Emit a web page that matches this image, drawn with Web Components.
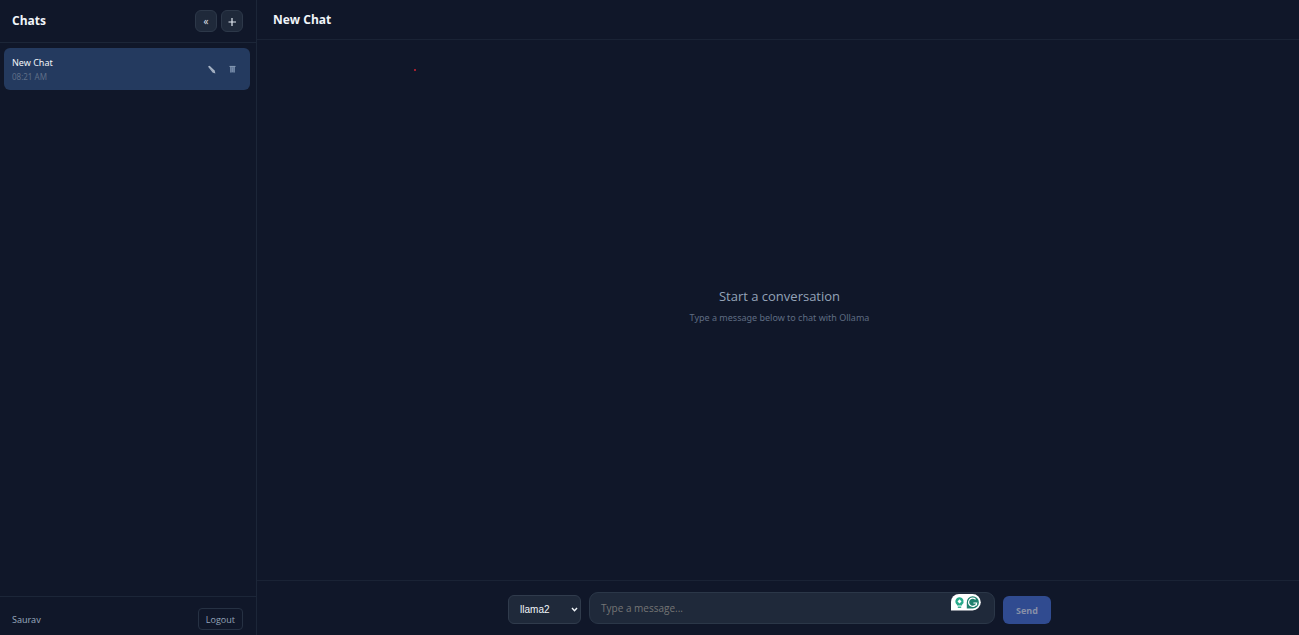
<!DOCTYPE html>
<html lang="en">
<head>
<meta charset="utf-8">
<title>New Chat</title>
<style>
html, body { height: 100%; margin: 0; }
body { background: #101729; color: #f1f5f9; font-family: "Segoe UI", "Noto Sans", sans-serif; overflow: hidden; }
</style>
</head>
<body>
<chat-app></chat-app>
<script>
const define = (name, html) => {
  const template = document.createElement('template');
  template.innerHTML = html;
  customElements.define(name, class extends HTMLElement {
    constructor() {
      super();
      this.attachShadow({ mode: 'open' }).append(template.content.cloneNode(true));
    }
  });
};

define('chat-list-item', `
<style>
:host { display: flex; align-items: center; gap: 8px; padding: 7px 11px 7px 8px; border-radius: 6px; background: #243a5f; }
.info { flex: 1; min-width: 0; }
.title { font-size: 9px; line-height: 16px; color: #f1f5f9; }
.time { font-size: 8px; line-height: 12px; color: #5f6e87; }
button { display: grid; place-items: center; width: 13px; height: 16px; padding: 0; border: 0; background: none; }
</style>
<div class="info">
  <div class="title"><slot name="title"></slot></div>
  <div class="time"><slot name="time"></slot></div>
</div>
<button type="button" aria-label="Rename chat">
  <svg width="9" height="9" viewBox="0 0 9 9"><path d="M1 1.6 2.6.8 7.6 5.6 8.4 8.4 5.6 7.6Z" fill="#a9b5c6"/><path d="M2 2.4 6.4 6.8" stroke="#8291a7" stroke-width=".5"/></svg>
</button>
<button type="button" aria-label="Delete chat">
  <svg width="7" height="8" viewBox="0 0 7 8"><path d="M.5.9H6.5V2H.5Z" fill="#8296b0"/><path d="M1 2H6L5.8 7.5H1.2Z" fill="#5f7698"/><path d="M1.7 2V7.5M3.5 2.5V7M5.3 2V7.5" stroke="#8496b0" stroke-width=".6"/></svg>
</button>`);

define('chat-sidebar', `
<style>
:host { display: flex; flex-direction: column; box-sizing: border-box; width: 257px; flex: none; border-right: 1px solid #1c2638; }
header { display: flex; align-items: center; gap: 4px; padding: 10px 13px 10px 12px; border-bottom: 1px solid #1c2638; }
h2 { flex: 1; margin: 0; font: 700 12px/20px "Segoe UI", "Open Sans", sans-serif; }
header button { display: grid; place-items: center; box-sizing: border-box; width: 22px; height: 22px; padding: 0; border: 1px solid #2d3849; border-radius: 6px; background: #1f293a; color: #e2e8f0; font: 10px "Segoe UI", "Open Sans", sans-serif; }
nav { flex: 1; padding: 5px 6px 0 4px; }
footer { display: flex; align-items: center; justify-content: space-between; padding: 11px 13px 5px 12px; border-top: 1px solid #1c2638; font-size: 9px; color: #94a3b8; }
footer button { box-sizing: border-box; height: 22px; padding: 0 7px; border: 1px solid #263143; border-radius: 4px; background: none; color: #94a3b8; font: 9px "Segoe UI", "Open Sans", sans-serif; }
</style>
<header>
  <h2>Chats</h2>
  <button type="button" aria-label="Collapse sidebar">«</button>
  <button type="button" aria-label="New chat"><svg width="8" height="10" viewBox="0 0 8 10"><path d="M4 2V10M.5 6H8" stroke="#e2e8f0" stroke-width="1.2" fill="none"/></svg></button>
</header>
<nav aria-label="Chats">
  <chat-list-item><span slot="title">New Chat</span><span slot="time">08:21 AM</span></chat-list-item>
</nav>
<footer><span>Saurav</span><button type="button">Logout</button></footer>`);

define('writing-badge', `
<style>:host { display: block; line-height: 0; }</style>
<svg width="30" height="17" viewBox="0 0 30 17" aria-hidden="true">
  <path d="M8 0H21.5A8.25 8.25 0 0 1 21.5 16.5H0V8A8 8 0 0 1 8 0Z" fill="#fff"/>
  <path d="M8.5 3.2A4.2 4.2 0 0 0 6 10.7V11.6H11V10.7A4.2 4.2 0 0 0 8.5 3.2Z" fill="#27aa8a"/>
  <path d="M8.5 5.2 10.5 7.4 8.5 9.6 6.5 7.4Z" fill="#fff"/>
  <path d="M6.8 13.2H10.2" stroke="#27aa8a" stroke-width="1.4"/>
  <path d="M21.7 2.2A6.2 6.2 0 1 1 21.7 14.6H15.8V8.4A6 6 0 0 1 21.7 2.2Z" fill="#20806e"/>
  <path d="M24.6 5.4A4.1 4.1 0 1 0 25.7 9H22.4M25.5 8.7V11.4" stroke="#fff" stroke-width="1.2" fill="none"/>
</svg>`);

define('chat-composer', `
<style>
:host { display: block; padding: 11px 16px 11px 19px; border-top: 1px solid #1a2335; }
form { display: flex; align-items: flex-end; justify-content: center; gap: 8px; }
.model { position: relative; display: flex; }
.model svg { position: absolute; right: 3px; top: 11px; pointer-events: none; }
select { appearance: none; box-sizing: border-box; width: 73px; height: 29px; padding: 0 0 0 11px; border: 1px solid #303b4c; border-radius: 6px; background: #1f293a; color: #f1f5f9; font: 10px "Liberation Sans", sans-serif; }
.field { position: relative; flex: 0 1 406px; display: flex; }
textarea { box-sizing: border-box; width: 100%; height: 32px; padding: 8px 11px; border: 1px solid #2b3748; border-radius: 9px; background: #1f293a; color: #f1f5f9; font: 10px/15px "Segoe UI", "Open Sans", sans-serif; resize: none; overflow: hidden; }
textarea::placeholder { color: #757575; }
writing-badge { position: absolute; top: 2px; right: 14px; }
.send { box-sizing: border-box; height: 28px; padding: 0 13px; border: 0; border-radius: 6px; background: #304b90; color: #8790a8; font: 700 9px "Segoe UI", "Open Sans", sans-serif; }
</style>
<form>
  <div class="model"><select aria-label="Model"><option>llama2</option></select><svg width="7" height="7" viewBox="0 0 7 7" aria-hidden="true"><path d="M1 2 3.5 4.7 6 2" fill="none" stroke="#f1f5f9" stroke-width="1.4"/></svg></div>
  <div class="field"><textarea rows="1" aria-label="Message" placeholder="Type a message..."></textarea><writing-badge></writing-badge></div>
  <button class="send" type="submit" disabled>Send</button>
</form>`);

define('chat-empty', `
<style>
:host { display: flex; flex-direction: column; align-items: center; justify-content: center; gap: 4px; padding: 0 0 8px 3px; text-align: center; }
h2 { margin: 0; font: 400 13px/20px "Segoe UI", "Open Sans", sans-serif; color: #94a3b8; }
p { margin: 0; font-size: 9px; line-height: 16px; color: #5f6c82; }
</style>
<h2><slot name="title"></slot></h2>
<p><slot></slot></p>`);

define('chat-app', `
<style>
:host { display: flex; height: 100vh; }
main { flex: 1; min-width: 0; display: flex; flex-direction: column; position: relative; }
header { padding: 10px 16px 9px; border-bottom: 1px solid #1a2335; }
h1 { margin: 0; font: 700 12px/20px "Segoe UI", "Open Sans", sans-serif; }
chat-empty { flex: 1; }
.mark { position: absolute; left: 157px; top: 69px; width: 2px; height: 2px; background: #a3202f; }
</style>
<chat-sidebar></chat-sidebar>
<main>
  <header><h1>New Chat</h1></header>
  <span class="mark"></span>
  <chat-empty><span slot="title">Start a conversation</span>Type a message below to chat with Ollama</chat-empty>
  <chat-composer></chat-composer>
</main>`);
</script>
</body>
</html>
